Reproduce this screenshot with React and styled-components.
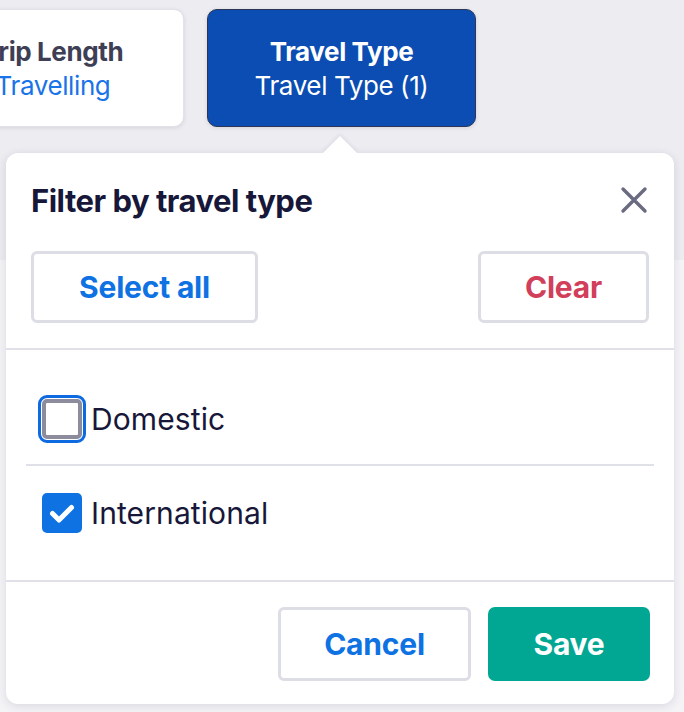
import React, { useState } from 'react';
import styled, { createGlobalStyle } from 'styled-components';

const GlobalStyle = createGlobalStyle`
	html, body {
		margin: 0;
		padding: 0;
	}
	body {
		font-family: Inter, "Noto Sans", sans-serif;
		color: #17173a;
	}
	* {
		box-sizing: border-box;
	}
`;

const Page = styled.div`
	width: 684px;
	height: 712px;
	overflow: hidden;
	background: linear-gradient(#ececf1 0, #ececf1 260px, #f4f4f7 260px);
`;

const FilterBar = styled.div`
	display: flex;
	align-items: stretch;
	gap: 23px;
	padding-top: 9px;
	margin-left: -78px;
`;

const FilterTab = styled.button`
	flex: none;
	width: ${props => props.wide}px;
	height: 118px;
	border-radius: 10px;
	border: 1px solid ${props => (props.active ? '#2c3656' : '#e2e2e8')};
	background: ${props => (props.active ? '#0b4db2' : '#ffffff')};
	box-shadow: 0 1px 4px rgba(30, 30, 60, 0.12);
	display: flex;
	flex-direction: column;
	align-items: center;
	justify-content: center;
	gap: 3px;
	font-family: inherit;
	cursor: pointer;
`;

const TabTitle = styled.span`
	font-size: 26px;
	font-weight: 700;
	letter-spacing: -0.4px;
	color: ${props => (props.active ? '#ffffff' : '#3e3e55')};
`;

const TabValue = styled.span`
	font-size: 26px;
	font-weight: 400;
	letter-spacing: -0.4px;
	color: ${props => (props.active ? '#ffffff' : '#1a73e8')};
`;

const Popover = styled.div`
	position: relative;
	margin: 26px 0 0 6px;
	width: 668px;
	height: 551px;
	background: #ffffff;
	border-radius: 12px;
	box-shadow: 0 2px 10px rgba(40, 40, 80, 0.14);
	display: flex;
	flex-direction: column;

	&::before {
		content: '';
		position: absolute;
		top: -12px;
		left: 322px;
		width: 24px;
		height: 24px;
		background: #ffffff;
		transform: rotate(45deg);
		box-shadow: -2px -2px 4px rgba(40, 40, 80, 0.06);
	}
`;

const Header = styled.div`
	position: relative;
	display: flex;
	align-items: center;
	justify-content: space-between;
	padding: 0 25px;
	height: 94px;
`;

const Title = styled.h2`
	margin: 0;
	font-size: 31px;
	font-weight: 700;
	letter-spacing: -0.5px;
	color: #17173a;
`;

const CloseBtn = styled.button`
	width: 34px;
	height: 34px;
	padding: 0;
	margin-right: -2px;
	border: none;
	background: none;
	display: flex;
	align-items: center;
	justify-content: center;
	cursor: pointer;
`;

const ActionRow = styled.div`
	display: flex;
	justify-content: space-between;
	padding: 4px 25px 25px 25px;
	border-bottom: 2px solid #e0e0e8;
`;

const OutlineBtn = styled.button`
	width: ${props => props.wide}px;
	height: ${props => props.tall || 72}px;
	border: 3px solid #dddde6;
	border-radius: 6px;
	background: #ffffff;
	font-family: inherit;
	font-size: 30px;
	font-weight: 700;
	letter-spacing: -0.2px;
	color: ${props => (props.danger ? '#d13f5b' : '#0e72e3')};
	cursor: pointer;
`;

const SolidBtn = styled.button`
	width: ${props => props.wide}px;
	height: 74px;
	border: none;
	border-radius: 7px;
	background: #02a794;
	font-family: inherit;
	font-size: 30px;
	font-weight: 700;
	letter-spacing: -0.2px;
	color: #ffffff;
	cursor: pointer;
`;

const List = styled.div`
	padding: 23px 20px 20px 20px;
	flex: 1;
`;

const Option = styled.label`
	display: flex;
	align-items: center;
	gap: 9px;
	height: 93px;
	padding-left: 16px;
	border-bottom: ${props => (props.last ? 'none' : '2px solid #e0e0e8')};
	font-size: 30px;
	font-weight: 400;
	letter-spacing: 0.1px;
	color: #17173a;
	cursor: pointer;
`;

const Box = styled.span`
	position: relative;
	flex: none;
	width: 40px;
	height: 40px;
	border-radius: 5px;
	display: flex;
	align-items: center;
	justify-content: center;
	background: ${props => (props.checked ? '#0e72e3' : '#ffffff')};
	border: ${props => (props.checked ? 'none' : '4px solid #8c8c9c')};
	outline: ${props => (props.focused ? '3px solid #0e6ae0' : 'none')};
	outline-offset: 1px;
`;

const Footer = styled.div`
	display: flex;
	justify-content: flex-end;
	gap: 17px;
	padding: 25px 24px 23px 24px;
	border-top: 2px solid #e0e0e8;
`;

const CloseIcon = () => (
	<svg width="30" height="30" viewBox="0 0 30 30">
		<path d="M4 4 L26 26 M26 4 L4 26" stroke="#6a6a80" strokeWidth="3.4" strokeLinecap="round" />
	</svg>
);

const CheckIcon = () => (
	<svg width="32" height="32" viewBox="0 0 32 32">
		<path d="M6.5 16.5 L13 23 L25.5 10.5" fill="none" stroke="#ffffff" strokeWidth="5" strokeLinecap="round" strokeLinejoin="round" />
	</svg>
);

const App = () => {
	const [checked, setChecked] = useState({ Domestic: false, International: true });
	const options = ['Domestic', 'International'];

	return (
		<Page>
			<GlobalStyle />
			<FilterBar>
				<FilterTab wide={262}>
					<TabTitle>Trip Length</TabTitle>
					<TabValue>Travelling</TabValue>
				</FilterTab>
				<FilterTab wide={269} active>
					<TabTitle active>Travel Type</TabTitle>
					<TabValue active>Travel Type (1)</TabValue>
				</FilterTab>
			</FilterBar>
			<Popover>
				<Header>
					<Title>Filter by travel type</Title>
					<CloseBtn aria-label="Close">
						<CloseIcon />
					</CloseBtn>
				</Header>
				<ActionRow>
					<OutlineBtn wide={227}>Select all</OutlineBtn>
					<OutlineBtn wide={171} danger>Clear</OutlineBtn>
				</ActionRow>
				<List>
					{options.map((o, i) => (
						<Option
							key={o}
							last={i === options.length - 1}
							onClick={() => setChecked({ ...checked, [o]: !checked[o] })}
						>
							<Box checked={checked[o]} focused={i === 0}>
								{checked[o] && <CheckIcon />}
							</Box>
							{o}
						</Option>
					))}
				</List>
				<Footer>
					<OutlineBtn wide={193} tall={74}>Cancel</OutlineBtn>
					<SolidBtn wide={162}>Save</SolidBtn>
				</Footer>
			</Popover>
		</Page>
	);
};

export default App;
